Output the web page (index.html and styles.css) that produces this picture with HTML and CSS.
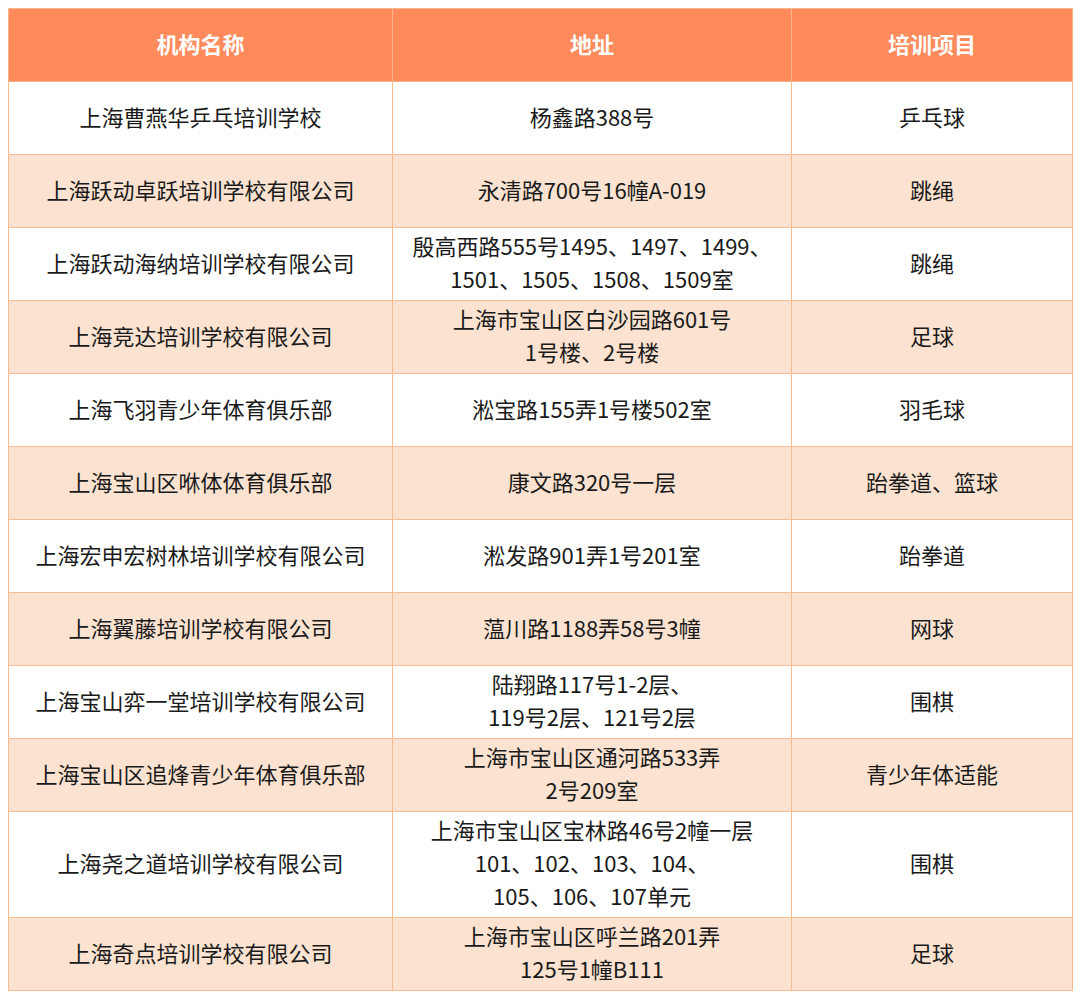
FILE: index.html
```html
<!DOCTYPE html>
<html lang="zh">
<head>
<meta charset="utf-8">
<link rel="stylesheet" href="styles.css">
</head>
<body>
<table class="list">
  <colgroup><col class="c1"><col class="c2"><col class="c3"></colgroup>
  <thead>
    <tr><th>机构名称</th><th>地址</th><th>培训项目</th></tr>
  </thead>
  <tbody>
    <tr><td>上海曹燕华乒乓培训学校</td><td>杨鑫路388号</td><td>乒乓球</td></tr>
    <tr><td>上海跃动卓跃培训学校有限公司</td><td>永清路700号16幢A-019</td><td>跳绳</td></tr>
    <tr><td>上海跃动海纳培训学校有限公司</td><td>殷高西路555号1495、1497、1499、<br>1501、1505、1508、1509室</td><td>跳绳</td></tr>
    <tr><td>上海竞达培训学校有限公司</td><td>上海市宝山区白沙园路601号<br>1号楼、2号楼</td><td>足球</td></tr>
    <tr><td>上海飞羽青少年体育俱乐部</td><td>淞宝路155弄1号楼502室</td><td>羽毛球</td></tr>
    <tr><td>上海宝山区咻体体育俱乐部</td><td>康文路320号一层</td><td>跆拳道、篮球</td></tr>
    <tr><td>上海宏申宏树林培训学校有限公司</td><td>淞发路901弄1号201室</td><td>跆拳道</td></tr>
    <tr><td>上海翼藤培训学校有限公司</td><td>蕰川路1188弄58号3幢</td><td>网球</td></tr>
    <tr><td>上海宝山弈一堂培训学校有限公司</td><td>陆翔路117号1-2层、<br>119号2层、121号2层</td><td>围棋</td></tr>
    <tr><td>上海宝山区追烽青少年体育俱乐部</td><td>上海市宝山区通河路533弄<br>2号209室</td><td>青少年体适能</td></tr>
    <tr><td>上海尧之道培训学校有限公司</td><td>上海市宝山区宝林路46号2幢一层<br>101、102、103、104、<br>105、106、107单元</td><td>围棋</td></tr>
    <tr><td>上海奇点培训学校有限公司</td><td>上海市宝山区呼兰路201弄<br>125号1幢B111</td><td>足球</td></tr>
  </tbody>
</table>
</body>
</html>
```
FILE: styles.css
```css
html, body {
  margin: 0;
  padding: 0;
  background: #ffffff;
}
body {
  padding: 8px;
  font-family: "Noto Sans CJK SC", "Noto Sans", sans-serif;
  color: #1a1a1a;
}
.list {
  border-collapse: collapse;
  table-layout: fixed;
  width: 1064px;
}
.list .c1 { width: 384px; }
.list .c2 { width: 399px; }
.list .c3 { width: 281px; }
.list th,
.list td {
  border: 1.5px solid #f6bb8f;
  text-align: center;
  vertical-align: middle;
  font-size: 22px;
  line-height: 33px;
  padding: 1px 4px 5px;
}
.list th {
  height: 66px;
  background: #ff8a5b;
  color: #ffffff;
  font-weight: 700;
  border-color: #f9b489;
}
.list td {
  height: 66px;
  font-weight: 400;
}
.list tbody tr:nth-child(even) td {
  background: #fce3d1;
}
```
